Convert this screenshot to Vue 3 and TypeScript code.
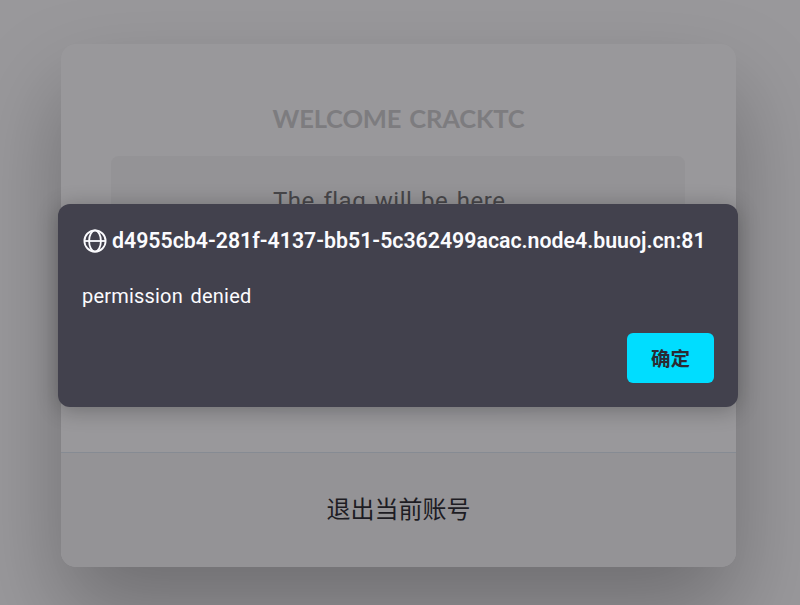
<script setup lang="ts">
const title = 'WELCOME CRACKTC'
const fieldText = 'The flag will be here'
const logoutText = '退出当前账号'
const origin = 'd4955cb4-281f-4137-bb51-5c362499acac.node4.buuoj.cn:81'
const message = 'permission denied'
const confirmText = '确定'
</script>

<template>
  <div class="page">
    <main class="card">
      <section class="content">
        <h2 class="title"><span>{{ title }}</span></h2>
        <div class="field"><span>{{ fieldText }}</span></div>
        <div class="submit"></div>
      </section>
      <footer class="footer"><span>{{ logoutText }}</span></footer>
    </main>
    <div class="backdrop">
      <div class="dialog" role="alertdialog">
        <header class="origin">
          <svg class="globe" viewBox="0 0 24 24" fill="none" stroke="#fbfbfe" stroke-width="1.8">
            <circle cx="12" cy="12" r="10.6" />
            <ellipse cx="12" cy="12" rx="5.9" ry="10.6" />
            <path d="M1.4 12h21.2" />
          </svg>
          <span class="host">{{ origin }}</span>
        </header>
        <p class="message"><span>{{ message }}</span></p>
        <div class="actions"><button class="confirm" type="button">{{ confirmText }}</button></div>
      </div>
    </div>
  </div>
</template>

<style>
body { margin: 0; background: #fff; }
</style>

<style scoped>
.page {
  position: relative;
  box-sizing: border-box;
  width: 800px;
  height: 605px;
  padding: 44px 64px 0 61px;
  overflow: hidden;
  background: #fff;
  font-family: Roboto, "Noto Sans CJK SC", sans-serif;
}
.card {
  display: flex;
  flex-direction: column;
  width: 675px;
  height: 523px;
  border-radius: 15px;
  overflow: hidden;
  background: #fff;
  box-shadow: 0 45px 90px rgba(0, 0, 0, 0.3);
}
.content {
  display: flex;
  flex-direction: column;
  align-items: center;
  height: 408px;
  overflow: hidden;
}
.title {
  margin: 59px 0 0;
  height: 30px;
  line-height: 30px;
  font-family: Lato, sans-serif;
  font-size: 25.5px;
  font-weight: 700;
  word-spacing: 2px;
  letter-spacing: -0.17px;
  color: #ccc;
  white-space: nowrap;
}
.field {
  box-sizing: border-box;
  width: 574px;
  height: 90px;
  margin: 23px 1px 0 0;
  padding: 30px 0 0 162px;
  border-radius: 7.5px;
  background: #f6f6f6;
  color: #6b6b6b;
  font-size: 24px;
  letter-spacing: 0.5px;
  word-spacing: 2.2px;
  font-variant-ligatures: none;
  line-height: 30px;
  white-space: nowrap;
}
.submit {
  width: 286px;
  height: 72px;
  margin-top: 32px;
  border-radius: 7.5px;
  background: #56baed;
  box-shadow: 0 15px 45px rgba(95, 186, 233, 0.4);
}
.footer {
  flex: 1;
  box-sizing: border-box;
  border-top: 1px solid #dce8f1;
  background: #f6f6f6;
  color: #1e1e26;
  font-family: "Noto Sans CJK SC", sans-serif;
  font-size: 24px;
  line-height: 109px;
  text-align: center;
}
.backdrop {
  position: absolute;
  inset: 0;
  box-sizing: border-box;
  padding: 204px 62px 0 58px;
  background: rgba(28, 27, 34, 0.45);
}
.dialog {
  box-sizing: border-box;
  display: flex;
  flex-direction: column;
  height: 203px;
  padding: 24px;
  border-radius: 12px;
  background: #42414d;
  color: #fbfbfe;
  box-shadow: 0 3px 21px rgba(12, 12, 13, 0.3);
}
.origin {
  display: flex;
  align-items: center;
  gap: 5px;
  height: 25px;
}
.globe {
  width: 24px;
  height: 24px;
  margin-left: 1px;
  flex: none;
}
.host {
  font-size: 21.3px;
  font-weight: 600;
  line-height: 25px;
  white-space: nowrap;
}
.message {
  margin: 29px 0 0;
  font-size: 20px;
  letter-spacing: 0.2px;
  word-spacing: 2.4px;
  line-height: 28px;
}
.actions {
  display: flex;
  justify-content: flex-end;
  margin-top: auto;
}
.confirm {
  width: 87px;
  height: 50px;
  padding: 0;
  border: 0;
  border-radius: 6px;
  background: #00ddff;
  color: #2b2a33;
  font: 700 19.5px/50px "Noto Sans CJK SC", sans-serif;
}
</style>
